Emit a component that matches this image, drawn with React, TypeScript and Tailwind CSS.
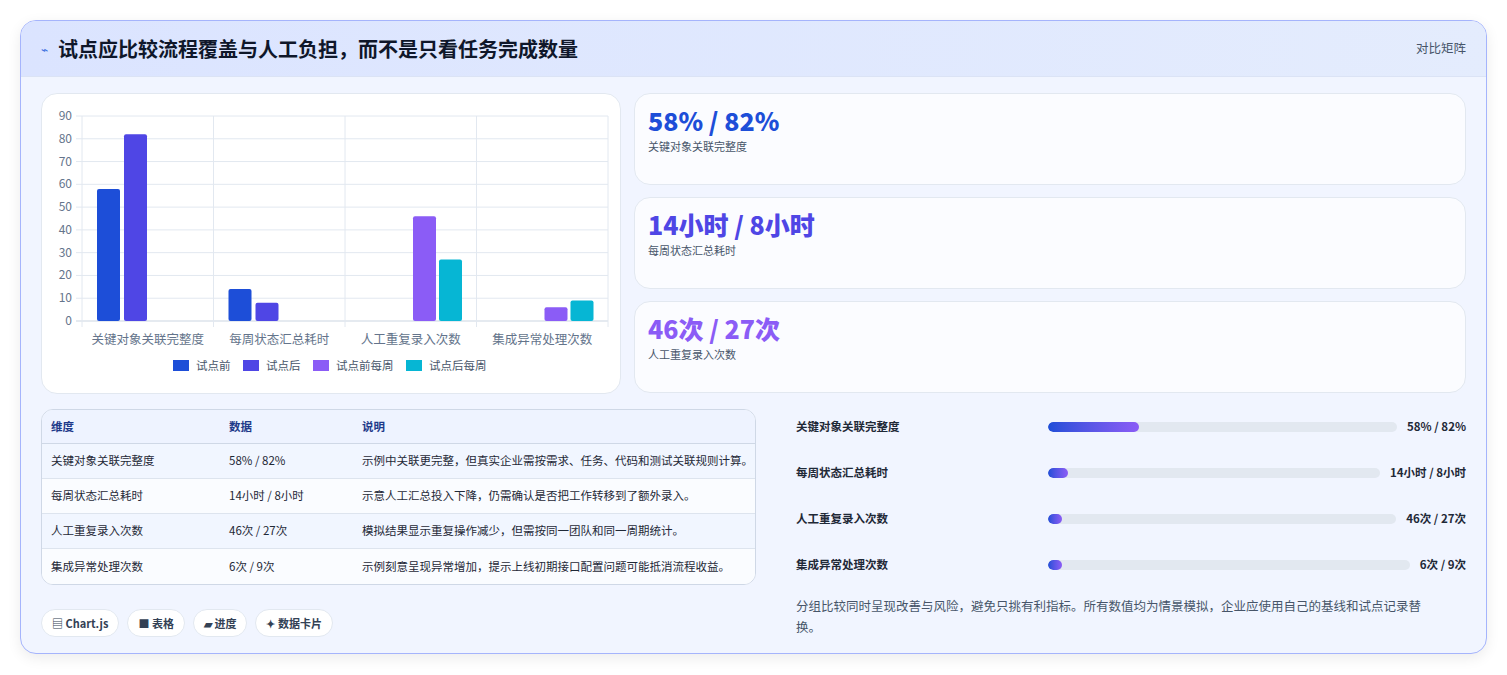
const FONT = { fontFamily: '"Noto Sans CJK SC", "Noto Sans", sans-serif' };

const COLORS = ["#1d4ed8", "#4f46e5", "#8b5cf6", "#06b6d4"];
const CATS = ["关键对象关联完整度", "每周状态汇总耗时", "人工重复录入次数", "集成异常处理次数"];
const DATA: (number | null)[][] = [
  [58, 82, null, null],
  [14, 8, null, null],
  [null, null, 46, 27],
  [null, null, 6, 9],
];
const LEGEND = ["试点前", "试点后", "试点前每周", "试点后每周"];

const BarChart = () => {
  const left = 40, right = 566, top = 22, bottom = 227;
  const unit = (bottom - top) / 90;
  const cw = (right - left) / 4;
  const offs = [15, 42, 68, 94];
  const legendX = [131, 201, 271, 364];
  return (
    <svg width="580" height="300" viewBox="0 0 580 300" style={FONT}>
      {Array.from({ length: 10 }).map((_, i) => {
        const y = bottom - i * 10 * unit;
        return (
          <g key={i}>
            <line x1={left - 6} x2={right} y1={y} y2={y} stroke={i === 0 ? "#cbd5e1" : "#e2e8f0"} />
            <text x={left - 10} y={y + 4} textAnchor="end" fontSize="12" fill="#64748b">{i * 10}</text>
          </g>
        );
      })}
      {[0, 1, 2, 3, 4].map((i) => (
        <line key={i} x1={left + i * cw} x2={left + i * cw} y1={top} y2={bottom + 6} stroke="#e2e8f0" />
      ))}
      {DATA.map((row, c) =>
        row.map((v, s) =>
          v == null ? null : (
            <rect key={`${c}-${s}`} x={left + c * cw + offs[s]} y={bottom - v * unit} width="23" height={v * unit} rx="2" fill={COLORS[s]} />
          )
        )
      )}
      {CATS.map((c, i) => (
        <text key={c} x={left + i * cw + cw / 2} y={250} textAnchor="middle" fontSize="12.5" fill="#64748b">{c}</text>
      ))}
      {LEGEND.map((l, i) => (
        <g key={l}>
          <rect x={legendX[i]} y={266} width="16" height="11" fill={COLORS[i]} />
          <text x={legendX[i] + 23} y={276} fontSize="11.5" fill="#475569">{l}</text>
        </g>
      ))}
    </svg>
  );
};

const stats = [
  { v: "58% / 82%", l: "关键对象关联完整度", c: "text-[#1d4ed8]" },
  { v: "14小时 / 8小时", l: "每周状态汇总耗时", c: "text-[#4f46e5]" },
  { v: "46次 / 27次", l: "人工重复录入次数", c: "text-[#8b5cf6]" },
];

const rows = [
  ["关键对象关联完整度", "58% / 82%", "示例中关联更完整，但真实企业需按需求、任务、代码和测试关联规则计算。"],
  ["每周状态汇总耗时", "14小时 / 8小时", "示意人工汇总投入下降，仍需确认是否把工作转移到了额外录入。"],
  ["人工重复录入次数", "46次 / 27次", "模拟结果显示重复操作减少，但需按同一团队和同一周期统计。"],
  ["集成异常处理次数", "6次 / 9次", "示例刻意呈现异常增加，提示上线初期接口配置问题可能抵消流程收益。"],
];

const progress = [
  { l: "关键对象关联完整度", v: "58% / 82%", w: "26%" },
  { l: "每周状态汇总耗时", v: "14小时 / 8小时", w: "6%" },
  { l: "人工重复录入次数", v: "46次 / 27次", w: "3.5%" },
  { l: "集成异常处理次数", v: "6次 / 9次", w: "3.5%" },
];

export default function App() {
  return (
    <div className="min-h-screen bg-white p-5" style={FONT}>
      <div className="rounded-2xl border border-[#a5b4fc] bg-[#f1f5ff] overflow-hidden shadow-[0_4px_14px_rgba(0,0,0,0.08)]">
        <div className="h-[56px] flex items-center justify-between px-5 bg-gradient-to-r from-[#dbe4ff] to-[#e4ecfd] border-b border-[#dbe3f5]">
          <div className="flex items-center gap-2.5">
            <span className="text-[#3b6fe0] text-xs">⌁</span>
            <h1 className="text-[20px] font-bold text-[#0f172a]">试点应比较流程覆盖与人工负担，而不是只看任务完成数量</h1>
          </div>
          <span className="text-[12.5px] text-[#475569]">对比矩阵</span>
        </div>
        <div className="px-5 pt-[16px] pb-4">
          <div className="flex gap-[13px]">
            <div className="w-[580px] h-[301px] bg-white rounded-2xl border border-[#e2e8f0] shrink-0 overflow-hidden">
              <BarChart />
            </div>
            <div className="flex-1 flex flex-col gap-3">
              {stats.map((s) => (
                <div key={s.l} className="h-[92px] rounded-2xl bg-[#fbfcff] border border-[#e2e8f0] px-[13px] pt-2.5">
                  <div className={`text-[25px] font-extrabold leading-[32px] ${s.c}`}>{s.v}</div>
                  <div className="text-[11px] text-[#475569] mt-0.5">{s.l}</div>
                </div>
              ))}
            </div>
          </div>
          <div className="flex gap-10 mt-[15px]">
            <div className="w-[715px] shrink-0">
              <div className="rounded-xl border border-[#cfd8e6] overflow-hidden bg-white">
                <div className="grid grid-cols-[178px_133px_1fr] h-[34px] items-center px-[9px] bg-[#eef3ff] border-b border-[#cfd8e6] text-[11.5px] font-semibold text-[#1e3a8a]">
                  <div>维度</div><div>数据</div><div>说明</div>
                </div>
                {rows.map((r, i) => (
                  <div key={r[0]} className={`grid grid-cols-[178px_133px_1fr] h-[35px] items-center px-[9px] text-[11.5px] text-[#1f2937] ${i < 3 ? "border-b border-[#dde4ee]" : ""} ${i % 2 === 0 ? "bg-[#f1f6ff]" : "bg-[#fafcff]"}`}>
                    <div>{r[0]}</div><div>{r[1]}</div><div className="whitespace-nowrap">{r[2]}</div>
                  </div>
                ))}
              </div>
              <div className="flex gap-2 mt-[24px]">
                {["▤ Chart.js", "■ 表格", "▰ 进度", "✦ 数据卡片"].map((t) => (
                  <span key={t} className="h-[28px] px-2.5 flex items-center rounded-full bg-white border border-[#e2e8f0] text-[11px] font-semibold text-[#334155]">{t}</span>
                ))}
              </div>
            </div>
            <div className="flex-1 -mt-[5px]">
              {progress.map((p) => (
                <div key={p.l} className="h-[46px] flex items-center gap-2.5 text-[11.5px] font-semibold text-[#1f2937]">
                  <div className="w-[242px] shrink-0">{p.l}</div>
                  <div className="flex-1 h-[10px] rounded-full bg-[#e2e8f0] overflow-hidden">
                    <div className="h-full rounded-full bg-gradient-to-r from-[#1d4ed8] to-[#8b5cf6] min-w-[14px]" style={{ width: p.w }} />
                  </div>
                  <div className="shrink-0 font-bold whitespace-nowrap">{p.v}</div>
                </div>
              ))}
              <p className="mt-[7px] text-[12.5px] leading-[21px] text-[#475569] pr-8">分组比较同时呈现改善与风险，避免只挑有利指标。所有数值均为情景模拟，企业应使用自己的基线和试点记录替换。</p>
            </div>
          </div>
        </div>
      </div>
    </div>
  );
}
